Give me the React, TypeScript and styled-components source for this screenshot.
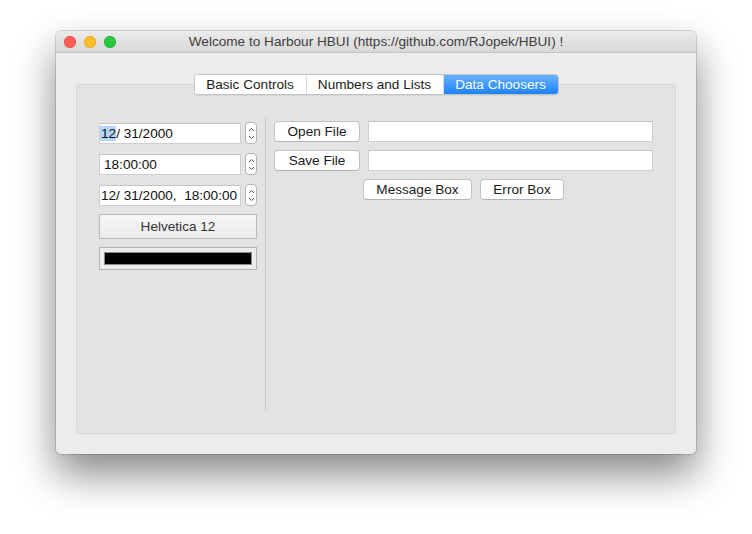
import styled, {createGlobalStyle} from 'styled-components';

const GlobalStyle = createGlobalStyle`
  html, body {
    margin: 0;
    padding: 0;
    background: #ffffff;
    font-family: "Liberation Sans", Arial, sans-serif;
    font-size: 13.6px;
    color: #1a1a1a;
  }
  body {
    min-height: 534px;
  }
`;

const Window = styled.div`
  margin: 31px 0 0 56px;
  width: 640px;
  height: 423px;
  border-radius: 5px;
  background: #ececec;
  box-shadow: 0 20px 40px rgba(0, 0, 0, 0.48), 0 0 0 1px rgba(0, 0, 0, 0.14);
  display: flex;
  flex-direction: column;
  overflow: hidden;
`;

const TitleBar = styled.div`
  height: 22px;
  flex: none;
  display: flex;
  align-items: center;
  position: relative;
  background: linear-gradient(#ececec, #d8d8d8);
  border-bottom: 1px solid #c4c4c4;
  box-sizing: border-box;
`;

const Lights = styled.div`
  display: flex;
  gap: 8px;
  padding-left: 8px;
`;

const Light = styled.span<{$color: string; $edge: string}>`
  width: 12px;
  height: 12px;
  border-radius: 50%;
  background: ${p => p.$color};
  box-shadow: inset 0 0 0 0.5px ${p => p.$edge};
`;

const Title = styled.div`
  position: absolute;
  left: 0;
  right: 0;
  text-align: center;
  color: #3e3e3e;
  pointer-events: none;
`;

const Body = styled.div`
  flex: 1;
  padding: 21px 20px 20px 20px;
  display: flex;
  flex-direction: column;
`;

const TabBar = styled.div`
  display: flex;
  justify-content: center;
  margin-bottom: -11px;
  position: relative;
  z-index: 1;
`;

const Tabs = styled.div`
  display: flex;
  height: 21px;
  border: 1px solid #c3c3c3;
  border-radius: 4px;
  background: #ffffff;
  overflow: hidden;
  box-sizing: border-box;
  box-shadow: 0 1px 0 rgba(0, 0, 0, 0.05);
`;

const Tab = styled.div<{$active?: boolean; $width: number}>`
  width: ${p => p.$width}px;
  display: flex;
  align-items: center;
  justify-content: center;
  color: ${p => (p.$active ? '#ffffff' : '#1a1a1a')};
  background: ${p => (p.$active ? 'linear-gradient(#69b1fa, #1b83fb)' : '#ffffff')};
  border-left: 1px solid #dcdcdc;
  &:first-child {
    border-left: none;
  }
`;

const Pane = styled.div`
  flex: 1;
  background: #e3e3e3;
  border: 1px solid #d6d6d6;
  border-radius: 4px;
  padding: 33px 0 0 22px;
  display: grid;
  grid-template-columns: 158px 1px 379px;
  column-gap: 8px;
  align-items: start;
`;

const LeftColumn = styled.div`
  padding-top: 4px;
  display: flex;
  flex-direction: column;
`;

const FieldRow = styled.div`
  display: flex;
  align-items: center;
  gap: 4px;
  height: 22px;
  margin-bottom: 9px;
`;

const Field = styled.div<{$width?: number; $inset?: number}>`
  width: ${p => (p.$width ? `${p.$width}px` : 'auto')};
  flex: ${p => (p.$width ? 'none' : '1')};
  height: 21px;
  box-sizing: border-box;
  background: #ffffff;
  border: 1px solid #cfcfcf;
  border-top-color: #c4c4c4;
  display: flex;
  align-items: center;
  padding-left: ${p => p.$inset ?? 4}px;
  white-space: pre;
  overflow: hidden;
  color: #111;
`;

const Selected = styled.span`
  background: #b4d6fd;
  margin-left: -1px;
  padding-left: 1px;
`;

const Spinner = styled.div`
  width: 12px;
  height: 22px;
  box-sizing: border-box;
  border: 1px solid #b3b3b3;
  border-radius: 4px;
  background: #ffffff;
  display: flex;
  align-items: center;
  justify-content: center;
`;

const FontButton = styled.div`
  height: 25px;
  box-sizing: border-box;
  border: 1px solid #b9b9b9;
  background: linear-gradient(#f7f7f7, #ebebeb);
  display: flex;
  align-items: center;
  justify-content: center;
  color: #333;
  margin-top: -1px;
`;

const ColorWell = styled.div`
  margin-top: 8px;
  height: 23px;
  box-sizing: border-box;
  border: 1px solid #b3b3b3;
  background: #ececec;
  padding: 4px;
`;

const ColorSwatch = styled.div`
  height: 100%;
  background: #000000;
  border: 1px solid #8a8a8a;
  box-sizing: border-box;
`;

const Divider = styled.div`
  width: 1px;
  height: 292px;
  background: #c9c9c9;
`;

const RightColumn = styled.div`
  padding-top: 3px;
  display: flex;
  flex-direction: column;
  gap: 8px;
`;

const FileRow = styled.div`
  display: flex;
  gap: 8px;
  align-items: center;
`;

const Button = styled.div<{$width: number}>`
  width: ${p => p.$width}px;
  height: 21px;
  box-sizing: border-box;
  border: 1px solid #c2c2c2;
  border-bottom-color: #b2b2b2;
  border-radius: 4px;
  background: #ffffff;
  display: flex;
  align-items: center;
  justify-content: center;
  color: #1a1a1a;
  flex: none;
`;

const ButtonRow = styled.div`
  display: flex;
  justify-content: center;
  gap: 8px;
`;

const SpinArrows = () => (
  <svg width="7" height="15" viewBox="0 0 7 15">
    <path d="M1 5 L3.5 2.5 L6 5" fill="none" stroke="#555" strokeWidth="1" />
    <path d="M1 10 L3.5 12.5 L6 10" fill="none" stroke="#555" strokeWidth="1" />
  </svg>
);

export default function App() {
  return (
    <>
      <GlobalStyle />
      <Window>
        <TitleBar>
          <Lights>
            <Light $color="#fc5f57" $edge="#de4a43" />
            <Light $color="#fdbc2e" $edge="#de9f23" />
            <Light $color="#28c840" $edge="#1fa930" />
          </Lights>
          <Title>Welcome to Harbour HBUI (https://github.com/RJopek/HBUI) !</Title>
        </TitleBar>
        <Body>
          <TabBar>
            <Tabs>
              <Tab $width={111}>Basic Controls</Tab>
              <Tab $width={136}>Numbers and Lists</Tab>
              <Tab $width={114} $active>
                Data Choosers
              </Tab>
            </Tabs>
          </TabBar>
          <Pane>
            <LeftColumn>
              <FieldRow>
                <Field $width={142} $inset={1}>
                  <Selected>12</Selected>/ 31/2000
                </Field>
                <Spinner>
                  <SpinArrows />
                </Spinner>
              </FieldRow>
              <FieldRow>
                <Field $width={142}>18:00:00</Field>
                <Spinner>
                  <SpinArrows />
                </Spinner>
              </FieldRow>
              <FieldRow>
                <Field $width={142} $inset={1}>
                  12/ 31/2000,  18:00:00
                </Field>
                <Spinner>
                  <SpinArrows />
                </Spinner>
              </FieldRow>
              <FontButton>Helvetica 12</FontButton>
              <ColorWell>
                <ColorSwatch />
              </ColorWell>
            </LeftColumn>
            <Divider />
            <RightColumn>
              <FileRow>
                <Button $width={86}>Open File</Button>
                <Field />
              </FileRow>
              <FileRow>
                <Button $width={86}>Save File</Button>
                <Field />
              </FileRow>
              <ButtonRow>
                <Button $width={109}>Message Box</Button>
                <Button $width={84}>Error Box</Button>
              </ButtonRow>
            </RightColumn>
          </Pane>
        </Body>
      </Window>
    </>
  );
}
